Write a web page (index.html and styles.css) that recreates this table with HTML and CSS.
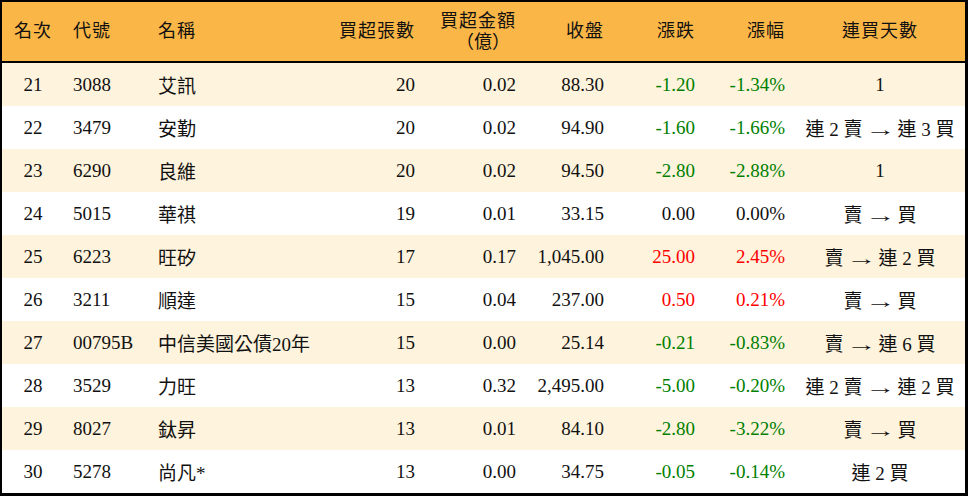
FILE: index.html
```html
<!DOCTYPE html>
<html lang="zh-Hant">
<head>
<meta charset="utf-8">
<link rel="stylesheet" href="styles.css">
</head>
<body>
<div class="frame">
<table class="rank">
<colgroup>
<col class="c-rank"><col class="c-code"><col class="c-name"><col class="c-vol"><col class="c-amt"><col class="c-close"><col class="c-chg"><col class="c-pct"><col class="c-days">
</colgroup>
<thead>
<tr>
<th class="ctr">名次</th>
<th class="lft">代號</th>
<th class="lft">名稱</th>
<th class="rgt">買超張數</th>
<th class="rgt"><span class="two">買超金額<br><span class="par">（億）</span></span></th>
<th class="rgt">收盤</th>
<th class="rgt">漲跌</th>
<th class="rgt">漲幅</th>
<th class="ctr">連買天數</th>
</tr>
</thead>
<tbody>
<tr><td class="ctr">21</td><td class="lft">3088</td><td class="lft">艾訊</td><td class="rgt">20</td><td class="rgt">0.02</td><td class="rgt">88.30</td><td class="rgt dn">-1.20</td><td class="rgt dn">-1.34%</td><td class="ctr">1</td></tr>
<tr><td class="ctr">22</td><td class="lft">3479</td><td class="lft">安勤</td><td class="rgt">20</td><td class="rgt">0.02</td><td class="rgt">94.90</td><td class="rgt dn">-1.60</td><td class="rgt dn">-1.66%</td><td class="ctr">連 2 賣<span class="arr">→</span>連 3 買</td></tr>
<tr><td class="ctr">23</td><td class="lft">6290</td><td class="lft">良維</td><td class="rgt">20</td><td class="rgt">0.02</td><td class="rgt">94.50</td><td class="rgt dn">-2.80</td><td class="rgt dn">-2.88%</td><td class="ctr">1</td></tr>
<tr><td class="ctr">24</td><td class="lft">5015</td><td class="lft">華祺</td><td class="rgt">19</td><td class="rgt">0.01</td><td class="rgt">33.15</td><td class="rgt">0.00</td><td class="rgt">0.00%</td><td class="ctr">賣<span class="arr">→</span>買</td></tr>
<tr><td class="ctr">25</td><td class="lft">6223</td><td class="lft">旺矽</td><td class="rgt">17</td><td class="rgt">0.17</td><td class="rgt">1,045.00</td><td class="rgt up">25.00</td><td class="rgt up">2.45%</td><td class="ctr">賣<span class="arr">→</span>連 2 買</td></tr>
<tr><td class="ctr">26</td><td class="lft">3211</td><td class="lft">順達</td><td class="rgt">15</td><td class="rgt">0.04</td><td class="rgt">237.00</td><td class="rgt up">0.50</td><td class="rgt up">0.21%</td><td class="ctr">賣<span class="arr">→</span>買</td></tr>
<tr><td class="ctr">27</td><td class="lft">00795B</td><td class="lft">中信美國公債20年</td><td class="rgt">15</td><td class="rgt">0.00</td><td class="rgt">25.14</td><td class="rgt dn">-0.21</td><td class="rgt dn">-0.83%</td><td class="ctr">賣<span class="arr">→</span>連 6 買</td></tr>
<tr><td class="ctr">28</td><td class="lft">3529</td><td class="lft">力旺</td><td class="rgt">13</td><td class="rgt">0.32</td><td class="rgt">2,495.00</td><td class="rgt dn">-5.00</td><td class="rgt dn">-0.20%</td><td class="ctr">連 2 賣<span class="arr">→</span>連 2 買</td></tr>
<tr><td class="ctr">29</td><td class="lft">8027</td><td class="lft">鈦昇</td><td class="rgt">13</td><td class="rgt">0.01</td><td class="rgt">84.10</td><td class="rgt dn">-2.80</td><td class="rgt dn">-3.22%</td><td class="ctr">賣<span class="arr">→</span>買</td></tr>
<tr><td class="ctr">30</td><td class="lft">5278</td><td class="lft">尚凡*</td><td class="rgt">13</td><td class="rgt">0.00</td><td class="rgt">34.75</td><td class="rgt dn">-0.05</td><td class="rgt dn">-0.14%</td><td class="ctr">連 2 買</td></tr>
</tbody>
</table>
</div>
</body>
</html>
```
FILE: styles.css
```css
html, body {
  margin: 0;
  padding: 0;
  background: #ffffff;
}
.frame {
  width: 963px;
  height: 491px;
  border-left: 2px solid #000;
  border-top: 2px solid #000;
  border-right: 3px solid #000;
  border-bottom: 3px solid #000;
  overflow: hidden;
}
.rank {
  width: 963px;
  table-layout: fixed;
  border-collapse: collapse;
  border-spacing: 0;
  font-family: "Liberation Serif", "Noto Sans CJK TC", serif;
  font-size: 19px;
  color: #111;
}
.c-rank { width: 62px; }
.c-code { width: 86px; }
.c-name { width: 180px; }
.c-vol { width: 95px; }
.c-amt { width: 101px; }
.c-close { width: 88px; }
.c-chg { width: 91px; }
.c-pct { width: 90px; }
.c-days { width: 170px; }
.rank th {
  height: 59px;
  padding: 0;
  background: #fab646;
  font-weight: normal;
  font-size: 18px;
  line-height: 21px;
  border-bottom: 2px solid #000;
  vertical-align: middle;
  letter-spacing: 1px;
}
.rank td {
  height: 43px;
  padding: 0;
  vertical-align: middle;
  white-space: nowrap;
}
.rank tbody tr:nth-child(odd) td {
  background: #fef3dc;
}
.ctr { text-align: center; }
.lft { text-align: left; padding-left: 9px !important; }
.rank td:nth-child(3), .rank th:nth-child(3) { padding-left: 8px !important; }
.rgt { text-align: right; padding-right: 10px !important; }
.two {
  display: inline-block;
  text-align: center;
}
.par { letter-spacing: 0; padding-left: 10px; }
.arr {
  font-family: "Liberation Serif", serif;
  font-size: 19px;
  display: inline-block;
  transform: scaleX(1.6);
  margin: 0 8px;
}
.dn { color: #008000; }
.up { color: #ff0000; }
```
